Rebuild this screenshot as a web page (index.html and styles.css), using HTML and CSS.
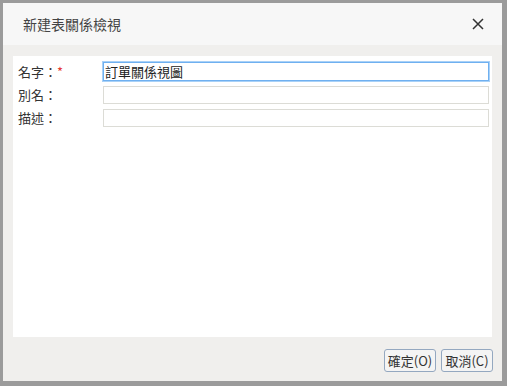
FILE: index.html
```html
<!DOCTYPE html>
<html lang="zh-Hant">
<head>
  <meta charset="UTF-8" />
  <title>新建表關係檢視</title>
  <link rel="stylesheet" href="styles.css">
</head>
<body>
  <div class="dialog">
    <div class="dialog-header">
      <span class="dialog-title">新建表關係檢視</span>
      <span class="close-btn">
        <svg width="12" height="12" viewBox="0 0 12 12">
          <path d="M1 1 L11 11 M11 1 L1 11" stroke="#333" stroke-width="1.5" fill="none"/>
        </svg>
      </span>
    </div>

    <div class="dialog-body">
      <div class="panel">
        <div class="form-row">
          <label class="form-label">名字：<span class="required">*</span></label>
          <input type="text" class="form-input active" value="訂單關係視圖" />
        </div>
        <div class="form-row">
          <label class="form-label">別名：</label>
          <input type="text" class="form-input" />
        </div>
        <div class="form-row">
          <label class="form-label">描述：</label>
          <input type="text" class="form-input" />
        </div>
      </div>
    </div>

    <div class="dialog-footer">
      <button class="btn">確定(O)</button>
      <button class="btn">取消(C)</button>
    </div>
  </div>
</body>
</html>
```

FILE: styles.css
```css
* {
  margin: 0;
  padding: 0;
  box-sizing: border-box;
}
body {
  font-family: "Noto Sans CJK TC", "Noto Sans", sans-serif;
  background: #9b9b9b;
  width: 507px;
  height: 386px;
  padding: 3px 5px 5px 3px;
  overflow: hidden;
}
.dialog {
  width: 499px;
  height: 378px;
  background: #f0efed;
  display: flex;
  flex-direction: column;
}
.dialog-header {
  height: 42px;
  background: #f7f7f7;
  display: flex;
  align-items: center;
  justify-content: space-between;
  padding: 0 18px 0 20px;
}
.dialog-title {
  font-size: 14px;
  color: #444;
}
.close-btn {
  display: flex;
  width: 12px;
  height: 12px;
}
.dialog-body {
  flex: 1;
  display: flex;
  padding: 11px 10px 0;
}
.panel {
  flex: 1;
  background: #fff;
  padding: 6px 3px 0 5px;
  display: flex;
  flex-direction: column;
  gap: 5px;
}
.form-row {
  display: flex;
  align-items: center;
  height: 18px;
}
.form-row:first-child {
  height: 19px;
}
.form-label {
  width: 85px;
  font-size: 13px;
  line-height: 18px;
  color: #333;
}
.required {
  color: #e53935;
}
.form-input {
  flex: 1;
  height: 18px;
  border: 1px solid #dcdcd6;
  font-family: "Noto Sans CJK TC", sans-serif;
  font-size: 13px;
  color: #222;
  padding: 0 1px;
  outline: none;
}
.form-input.active {
  height: 19px;
  border: 1px solid #6fb0f0;
  box-shadow: 0 0 0 1px #a9d1f7;
}
.dialog-footer {
  display: flex;
  justify-content: flex-end;
  gap: 5px;
  padding: 12px 9px 9px;
}
.btn {
  width: 52px;
  height: 23px;
  border: 1px solid #94a8c0;
  border-radius: 3px;
  background: #f4f4f4;
  font-family: "Noto Sans CJK TC", sans-serif;
  font-size: 13px;
  color: #333;
}
```
